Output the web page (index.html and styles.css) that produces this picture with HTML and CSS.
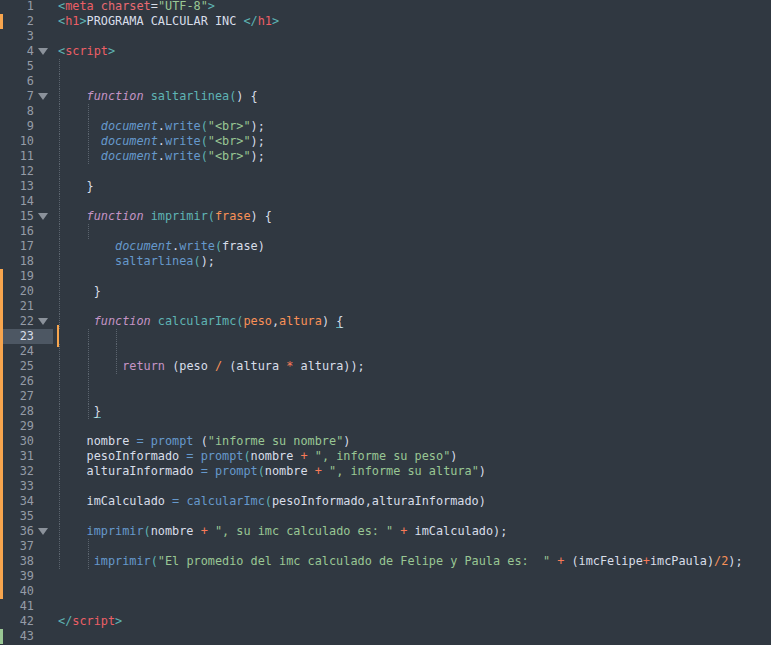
FILE: index.html
```html
<!DOCTYPE html>
<html lang="es">
<head>
    <meta charset="UTF-8">
    <title>calcular imc</title>
    <link rel="stylesheet" href="styles.css">
</head>
<body>
<div class="editor">
    <div class="line"><div class="gut"><span class="num">1</span><span class="fold"></span></div><div class="code"><span class="t">&lt;</span><span class="tn">meta</span> <span class="at">charset</span>=<span class="s">"UTF-8"</span><span class="t">&gt;</span></div></div>
    <div class="line mod"><div class="gut"><span class="num">2</span><span class="fold"></span></div><div class="code"><span class="t">&lt;</span><span class="tn">h1</span><span class="t">&gt;</span>PROGRAMA CALCULAR INC <span class="t">&lt;/</span><span class="tn">h1</span><span class="t">&gt;</span></div></div>
    <div class="line"><div class="gut"><span class="num">3</span><span class="fold"></span></div><div class="code"></div></div>
    <div class="line"><div class="gut"><span class="num">4</span><span class="fold open"></span></div><div class="code"><span class="t">&lt;</span><span class="tn">script</span><span class="t">&gt;</span></div></div>
    <div class="line"><div class="gut"><span class="num">5</span><span class="fold"></span></div><div class="code"><i class="g"></i></div></div>
    <div class="line"><div class="gut"><span class="num">6</span><span class="fold"></span></div><div class="code"><i class="g"></i></div></div>
    <div class="line"><div class="gut"><span class="num">7</span><span class="fold open"></span></div><div class="code"><i class="g"></i>    <span class="k">function</span> <span class="f">saltarlinea</span><span class="po">(</span>) {</div></div>
    <div class="line"><div class="gut"><span class="num">8</span><span class="fold"></span></div><div class="code"><i class="g"></i>    <i class="g"></i></div></div>
    <div class="line"><div class="gut"><span class="num">9</span><span class="fold"></span></div><div class="code"><i class="g"></i>    <i class="g"></i>  <span class="d">document</span>.<span class="m">write</span><span class="po">(</span><span class="s">"&lt;br&gt;"</span>);</div></div>
    <div class="line"><div class="gut"><span class="num">10</span><span class="fold"></span></div><div class="code"><i class="g"></i>    <i class="g"></i>  <span class="d">document</span>.<span class="m">write</span><span class="po">(</span><span class="s">"&lt;br&gt;"</span>);</div></div>
    <div class="line"><div class="gut"><span class="num">11</span><span class="fold"></span></div><div class="code"><i class="g"></i>    <i class="g"></i>  <span class="d">document</span>.<span class="m">write</span><span class="po">(</span><span class="s">"&lt;br&gt;"</span>);</div></div>
    <div class="line"><div class="gut"><span class="num">12</span><span class="fold"></span></div><div class="code"><i class="g"></i></div></div>
    <div class="line"><div class="gut"><span class="num">13</span><span class="fold"></span></div><div class="code"><i class="g"></i>    }</div></div>
    <div class="line"><div class="gut"><span class="num">14</span><span class="fold"></span></div><div class="code"><i class="g"></i></div></div>
    <div class="line"><div class="gut"><span class="num">15</span><span class="fold open"></span></div><div class="code"><i class="g"></i>    <span class="k">function</span> <span class="f">imprimir</span><span class="po">(</span><span class="p">frase</span>) {</div></div>
    <div class="line"><div class="gut"><span class="num">16</span><span class="fold"></span></div><div class="code"><i class="g"></i>    <i class="g"></i></div></div>
    <div class="line"><div class="gut"><span class="num">17</span><span class="fold"></span></div><div class="code"><i class="g"></i>        <span class="d">document</span>.<span class="m">write</span><span class="po">(</span>frase)</div></div>
    <div class="line"><div class="gut"><span class="num">18</span><span class="fold"></span></div><div class="code"><i class="g"></i>        <span class="m">saltarlinea</span><span class="po">(</span>);</div></div>
    <div class="line mod"><div class="gut"><span class="num">19</span><span class="fold"></span></div><div class="code"><i class="g"></i></div></div>
    <div class="line mod"><div class="gut"><span class="num">20</span><span class="fold"></span></div><div class="code"><i class="g"></i>     }</div></div>
    <div class="line mod"><div class="gut"><span class="num">21</span><span class="fold"></span></div><div class="code"><i class="g"></i></div></div>
    <div class="line mod"><div class="gut"><span class="num">22</span><span class="fold open"></span></div><div class="code"><i class="g"></i>     <span class="k">function</span> <span class="f">calcularImc</span><span class="po">(</span><span class="p">peso</span>,<span class="p">altura</span>) <span class="u">{</span></div></div>
    <div class="line mod cur"><div class="gut"><span class="num">23</span><span class="fold"></span></div><div class="code"><i class="caret"></i>    <i class="g"></i>    <i class="g"></i></div></div>
    <div class="line mod"><div class="gut"><span class="num">24</span><span class="fold"></span></div><div class="code"><i class="g"></i>    <i class="g"></i>    <i class="g"></i></div></div>
    <div class="line mod"><div class="gut"><span class="num">25</span><span class="fold"></span></div><div class="code"><i class="g"></i>    <i class="g"></i>    <i class="g"></i> <span class="kr">return</span> (peso <span class="n">/</span> (altura <span class="o">*</span> altura));</div></div>
    <div class="line mod"><div class="gut"><span class="num">26</span><span class="fold"></span></div><div class="code"><i class="g"></i>    <i class="g"></i></div></div>
    <div class="line mod"><div class="gut"><span class="num">27</span><span class="fold"></span></div><div class="code"><i class="g"></i>    <i class="g"></i></div></div>
    <div class="line mod"><div class="gut"><span class="num">28</span><span class="fold"></span></div><div class="code"><i class="g"></i>    <i class="g"></i> <span class="u">}</span></div></div>
    <div class="line mod"><div class="gut"><span class="num">29</span><span class="fold"></span></div><div class="code"><i class="g"></i></div></div>
    <div class="line mod"><div class="gut"><span class="num">30</span><span class="fold"></span></div><div class="code"><i class="g"></i>    nombre <span class="a">=</span> <span class="m">prompt</span> (<span class="s">"informe su nombre"</span>)</div></div>
    <div class="line mod"><div class="gut"><span class="num">31</span><span class="fold"></span></div><div class="code"><i class="g"></i>    pesoInformado <span class="a">=</span> <span class="m">prompt</span><span class="po">(</span>nombre <span class="o">+</span> <span class="s">", informe su peso"</span>)</div></div>
    <div class="line mod"><div class="gut"><span class="num">32</span><span class="fold"></span></div><div class="code"><i class="g"></i>    alturaInformado <span class="a">=</span> <span class="m">prompt</span><span class="po">(</span>nombre <span class="o">+</span> <span class="s">", informe su altura"</span>)</div></div>
    <div class="line mod"><div class="gut"><span class="num">33</span><span class="fold"></span></div><div class="code"><i class="g"></i></div></div>
    <div class="line mod"><div class="gut"><span class="num">34</span><span class="fold"></span></div><div class="code"><i class="g"></i>    imCalculado <span class="a">=</span> <span class="m">calcularImc</span><span class="po">(</span>pesoInformado,alturaInformado)</div></div>
    <div class="line mod"><div class="gut"><span class="num">35</span><span class="fold"></span></div><div class="code"><i class="g"></i></div></div>
    <div class="line mod"><div class="gut"><span class="num">36</span><span class="fold open"></span></div><div class="code"><i class="g"></i>    <span class="m">imprimir</span><span class="po">(</span>nombre <span class="o">+</span> <span class="s">", su imc calculado es: "</span> <span class="o">+</span> imCalculado);</div></div>
    <div class="line mod"><div class="gut"><span class="num">37</span><span class="fold"></span></div><div class="code"><i class="g"></i>    <i class="g"></i></div></div>
    <div class="line mod"><div class="gut"><span class="num">38</span><span class="fold"></span></div><div class="code"><i class="g"></i>    <i class="g"></i> <span class="m">imprimir</span><span class="po">(</span><span class="s">"El promedio del imc calculado de Felipe y Paula es:  "</span> <span class="o">+</span> (imcFelipe<span class="o">+</span>imcPaula)<span class="n">/2</span>);</div></div>
    <div class="line mod"><div class="gut"><span class="num">39</span><span class="fold"></span></div><div class="code"></div></div>
    <div class="line mod"><div class="gut"><span class="num">40</span><span class="fold"></span></div><div class="code"></div></div>
    <div class="line"><div class="gut"><span class="num">41</span><span class="fold"></span></div><div class="code"></div></div>
    <div class="line"><div class="gut"><span class="num">42</span><span class="fold"></span></div><div class="code"><span class="t">&lt;/</span><span class="tn">script</span><span class="t">&gt;</span></div></div>
    <div class="line add"><div class="gut"><span class="num">43</span><span class="fold"></span></div><div class="code"></div></div>
</div>
</body>
</html>
```
FILE: styles.css
```css
html, body {
    background-color: #303841;
}
body {
    margin: 0;
    font-family: "DejaVu Sans Mono", monospace;
    font-size: 11.85px;
    color: #d8dee9;
}
.editor {
    padding-top: 1px;
    margin-top: -2px;
}
.line {
    display: flex;
    height: 15px;
    line-height: 15px;
}
/* gutter: marcador de cambios + numero + flecha */
.gut {
    flex: none;
    display: flex;
    width: 50px;
    border-left: 3px solid transparent;
    background-clip: padding-box;
}
.line.mod .gut {
    border-left-color: #f7a54e;
}
.line.add .gut {
    border-left-color: #99c794;
}
.line.cur .gut {
    background-color: #4d5763;
}
.num {
    width: 31px;
    text-align: right;
    color: #959ca7;
}
.line.cur .num {
    color: #d8dee9;
}
.fold {
    width: 19px;
    display: flex;
    align-items: center;
}
.fold.open::before {
    content: "";
    margin-left: 4px;
    border-left: 5px solid transparent;
    border-right: 5px solid transparent;
    border-top: 7px solid #8b929b;
}
.code {
    padding-left: 5px;
    white-space: pre;
}
/* guias de indentacion */
.g {
    display: inline-block;
    width: 0;
    height: 15px;
    vertical-align: top;
    border-left: 1px dotted #5b646e;
    margin-left: 1px;
    margin-right: -2px;
}
.caret {
    display: inline-block;
    width: 2px;
    height: 22px;
    vertical-align: top;
    background-color: #f7a54e;
    margin: -4px -1px -3px -1px;
}
/* colores de sintaxis */
.t { color: #5fb4b4; }
.tn { color: #ec5f66; }
.at { color: #e86a72; }
.s { color: #99c794; }
.k { color: #c594c5; font-style: italic; }
.kr { color: #c594c5; }
.f { color: #5fb4b4; }
.p { color: #f99157; }
.d { color: #6699cc; font-style: italic; }
.m { color: #6699cc; }
.po { color: #5fb4b4; }
.o { color: #f97b58; }
.n { color: #f99157; }
.a { color: #6699cc; }
.u {
    text-decoration: underline;
    text-decoration-color: #5fb4b4;
    text-underline-offset: 2px;
}
```
